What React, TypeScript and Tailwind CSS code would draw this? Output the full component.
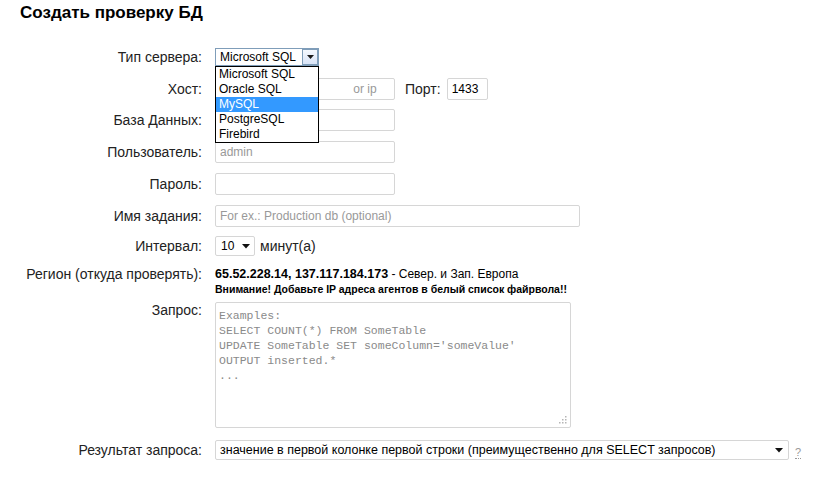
const label = "w-[202px] shrink-0 text-right text-[14px] leading-[16px] text-[#222]";
const input =
  "h-[22px] rounded-[2px] border border-[#d6d6d6] bg-white px-[4px] text-[12px] text-black outline-none placeholder:text-[#999]";

function Caret() {
  return (
    <svg width="8" height="5" viewBox="0 0 8 5" className="shrink-0">
      <path d="M0 0h8L4 4.5z" fill="#111" />
    </svg>
  );
}

export default function App() {
  const servers = ["Microsoft SQL", "Oracle SQL", "MySQL", "PostgreSQL", "Firebird"];

  return (
    <main className="min-h-screen w-[824px] bg-white font-['Liberation_Sans',Arial,sans-serif] text-black">
      {/* Title */}
      <h1 className="pl-[20px] pt-[3px] text-[17px] font-bold leading-[20px]">Создать проверку БД</h1>

      <div className="pt-[25px]">
        {/* Server type */}
        <div className="flex h-[18px] items-center">
          <span className={label}>Тип сервера:</span>
          <div className="relative z-10 ml-[13px]">
            <div className="flex h-[18px] w-[104px] items-center border border-[#7f9db9] bg-white">
              <span className="flex-1 pl-[4px] text-[12px] leading-[16px]">Microsoft SQL</span>
              <span className="flex h-[16px] w-[16px] items-center justify-center border border-[#7f9db9] bg-gradient-to-b from-[#f4f8fe] to-[#d9e4f7]">
                <svg width="7" height="4" viewBox="0 0 7 4">
                  <path d="M0 0h7L3.5 4z" fill="#1a1a1a" />
                </svg>
              </span>
            </div>
            {/* Open list */}
            <ul className="absolute left-0 top-[18px] w-[104px] border border-black bg-white">
              {servers.map((s) => (
                <li
                  key={s}
                  className={
                    s === "MySQL"
                      ? "h-[15px] bg-[#3399ff] pl-[3px] text-[12px] leading-[15px] text-white"
                      : "h-[15px] pl-[3px] text-[12px] leading-[15px] text-black"
                  }
                >
                  {s}
                </li>
              ))}
            </ul>
          </div>
        </div>

        {/* Host + port */}
        <div className="mt-[12px] flex h-[22px] items-center">
          <span className={label}>Хост:</span>
          <input
            className={`${input} ml-[13px] w-[180px]`}
            placeholder={"For ex.: myserver\u00a0\u00a0\u00a0\u00a0\u00a0\u00a0\u00a0\u00a0\u00a0\u00a0\u00a0 or ip"}
          />
          <span className="ml-[10px] text-[14px] leading-[16px] text-[#222]">Порт:</span>
          <input className={`${input} ml-[6px] w-[41px]`} defaultValue="1433" />
        </div>

        {/* Database */}
        <div className="mt-[9px] flex h-[22px] items-center">
          <span className={label}>База Данных:</span>
          <input className={`${input} ml-[13px] w-[180px]`} />
        </div>

        {/* User */}
        <div className="mt-[10px] flex h-[22px] items-center">
          <span className={label}>Пользователь:</span>
          <input className={`${input} ml-[13px] w-[180px]`} placeholder="admin" />
        </div>

        {/* Password */}
        <div className="mt-[10px] flex h-[22px] items-center">
          <span className={label}>Пароль:</span>
          <input type="password" className={`${input} ml-[13px] w-[180px]`} />
        </div>

        {/* Task name */}
        <div className="mt-[10px] flex h-[22px] items-center">
          <span className={label}>Имя задания:</span>
          <input className={`${input} ml-[13px] w-[365px]`} placeholder="For ex.: Production db (optional)" />
        </div>

        {/* Interval */}
        <div className="mt-[9px] flex h-[20px] items-center">
          <span className={label}>Интервал:</span>
          <div className="ml-[13px] flex h-[20px] w-[40px] items-center rounded-[2px] border border-[#d6d6d6] bg-white pl-[5px] pr-[4px]">
            <span className="flex-1 text-[12px] leading-[14px]">10</span>
            <Caret />
          </div>
          <span className="ml-[5px] text-[14px] leading-[16px] text-[#222]">минут(а)</span>
        </div>

        {/* Region */}
        <div className="mt-[10px] flex items-start">
          <span className={label}>Регион (откуда проверять):</span>
          <div className="ml-[13px]">
            <div className="text-[12px] leading-[16px]">
              <b className="text-[12.5px]">65.52.228.14, 137.117.184.173</b> - Север. и Зап. Европа
            </div>
            <div className="text-[10.5px] font-bold leading-[14px]">
              Внимание! Добавьте IP адреса агентов в белый список файрвола!!
            </div>
          </div>
        </div>

        {/* Query */}
        <div className="mt-[6px] flex items-start">
          <span className={label}>Запрос:</span>
          <div className="relative ml-[13px] h-[126px] w-[356px] rounded-[2px] border border-[#d6d6d6] bg-white px-[3px] pt-[5px]">
            <pre className="font-['Liberation_Mono','Courier_New',monospace] text-[11.5px] leading-[15px] text-[#8a8a8a]">
              {"Examples:\nSELECT COUNT(*) FROM SomeTable\nUPDATE SomeTable SET someColumn='someValue'\nOUTPUT inserted.*\n..."}
            </pre>
            <svg width="8" height="8" viewBox="0 0 8 8" className="absolute bottom-[3px] right-[3px]">
              <rect x="6" y="0" width="1.5" height="1.5" fill="#b5b5b5" />
              <rect x="3" y="3" width="1.5" height="1.5" fill="#b5b5b5" />
              <rect x="6" y="3" width="1.5" height="1.5" fill="#b5b5b5" />
              <rect x="0" y="6" width="1.5" height="1.5" fill="#b5b5b5" />
              <rect x="3" y="6" width="1.5" height="1.5" fill="#b5b5b5" />
              <rect x="6" y="6" width="1.5" height="1.5" fill="#b5b5b5" />
            </svg>
          </div>
        </div>

        {/* Result */}
        <div className="mt-[12px] flex h-[20px] items-center">
          <span className={label}>Результат запроса:</span>
          <div className="ml-[13px] flex h-[20px] w-[574px] items-center rounded-[2px] border border-[#d6d6d6] bg-white pl-[4px] pr-[5px]">
            <span className="flex-1 text-[12.5px] leading-[14px]">
              значение в первой колонке первой строки (преимущественно для SELECT запросов)
            </span>
            <Caret />
          </div>
          <span className="ml-[6px] mt-[4px] border-b border-dotted border-[#999] text-[11px] leading-[12px] text-[#999]">?</span>
        </div>
      </div>
    </main>
  );
}
